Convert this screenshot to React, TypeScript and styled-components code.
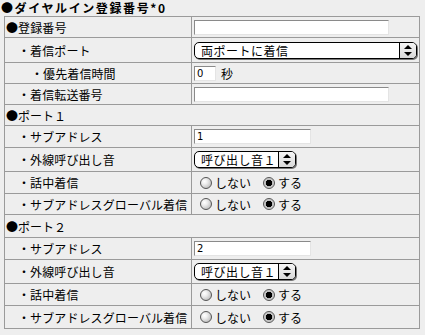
import React from 'react';
import styled, { createGlobalStyle } from 'styled-components';

const Global = createGlobalStyle`
  html, body { margin: 0; padding: 0; background: #eeeeee; }
  body {
    font-family: "Noto Sans CJK JP", "Noto Sans", sans-serif;
    font-size: 12px;
    color: #000;
  }
`;

const Page = styled.div`
  width: 425px;
  height: 335px;
  box-sizing: border-box;
  overflow: hidden;
`;

const Title = styled.div`
  height: 16px;
  line-height: 15px;
  padding-left: 1px;
  font-weight: bold;
  font-size: 12px;
  letter-spacing: 1.6px;
  white-space: nowrap;
`;

const Table = styled.div`
  margin-left: 4px;
  width: 416px;
  box-sizing: border-box;
  border: 1px solid #9a9a9a;
  border-top: none;
  display: flex;
  flex-direction: column;
`;

const Row = styled.div<{ $h: number }>`
  display: grid;
  grid-template-columns: 187px 1fr;
  height: ${p => p.$h}px;
  border-top: 1px solid #9a9a9a;
  box-sizing: border-box;
`;

const HeadRow = styled.div<{ $h: number }>`
  display: flex;
  align-items: center;
  height: ${p => p.$h}px;
  border-top: 1px solid #9a9a9a;
  box-sizing: border-box;
  padding-left: 1px;
  white-space: nowrap;
`;

const Label = styled.div<{ $indent: number }>`
  display: flex;
  align-items: center;
  padding-left: ${p => p.$indent}px;
  border-right: 1px solid #9a9a9a;
  white-space: nowrap;
  letter-spacing: 0.1px;
`;

const Value = styled.div`
  display: flex;
  align-items: center;
  padding-left: 2px;
  gap: 4px;
`;

const TextBox = styled.div<{ $w: number }>`
  width: ${p => p.$w}px;
  height: 15px;
  box-sizing: border-box;
  background: #fff;
  border-top: 1px solid #8a8a8a;
  border-left: 1px solid #8a8a8a;
  border-right: 1px solid #e4e4e4;
  border-bottom: 1px solid #e4e4e4;
  font-family: "DejaVu Sans", sans-serif;
  font-size: 10px;
  line-height: 13px;
  padding-left: 2px;
`;

const Unit = styled.span`
  margin-left: 1px;
`;

const Select = styled.div<{ $w: number }>`
  width: ${p => p.$w}px;
  height: 17px;
  box-sizing: border-box;
  border: 1px solid #000;
  border-radius: 5px;
  background: #fff;
  display: flex;
  align-items: stretch;
  box-shadow: 1px 1px 0 #777;
  overflow: hidden;
  white-space: nowrap;
`;

const SelectText = styled.div`
  flex: 1;
  display: flex;
  align-items: center;
  padding-left: 6px;
  line-height: 15px;
  letter-spacing: 0.5px;
`;

const SelectArrow = styled.div`
  width: 16px;
  border-left: 1px solid #000;
  background: linear-gradient(#f6f6f6, #d8d8d8);
  display: flex;
  align-items: center;
  justify-content: center;
`;

const RadioGroup = styled.div`
  display: flex;
  align-items: center;
  padding-left: 6px;
`;

const RadioItem = styled.label`
  display: flex;
  align-items: center;
  gap: 3px;
  margin-right: 12px;
  white-space: nowrap;
`;

const RadioDot = styled.span<{ $on: boolean }>`
  width: 12px;
  height: 12px;
  box-sizing: border-box;
  border-radius: 50%;
  border: 1px solid #555;
  background: ${p =>
    p.$on
      ? 'radial-gradient(circle at 50% 50%, #000 0 3px, #bbb 3.5px, #eee 100%)'
      : 'radial-gradient(circle at 35% 35%, #fff 0, #eee 30%, #aaa 100%)'};
`;

const Arrows = () => (
  <svg width="8" height="11" viewBox="0 0 8 11">
    <path d="M4 0 L8 4 L0 4 Z" fill="#000" />
    <path d="M0 7 L8 7 L4 11 Z" fill="#000" />
  </svg>
);

const Sel = ({ w, text }: { w: number; text: string }) => (
  <Select $w={w}>
    <SelectText>{text}</SelectText>
    <SelectArrow>
      <Arrows />
    </SelectArrow>
  </Select>
);

const Radios = ({ on }: { on: number }) => (
  <RadioGroup>
    <RadioItem>
      <RadioDot $on={on === 0} />
      しない
    </RadioItem>
    <RadioItem>
      <RadioDot $on={on === 1} />
      する
    </RadioItem>
  </RadioGroup>
);

const PortBlock = ({ n, sub, tops }: { n: string; sub: string; tops: number[] }) => (
  <>
    <HeadRow $h={tops[0]}>●ポート{n}</HeadRow>
    <Row $h={tops[1]}>
      <Label $indent={13}>・サブアドレス</Label>
      <Value>
        <TextBox $w={117}>{sub}</TextBox>
      </Value>
    </Row>
    <Row $h={tops[2]}>
      <Label $indent={13}>・外線呼び出し音</Label>
      <Value>
        <Sel w={102} text="呼び出し音１" />
      </Value>
    </Row>
    <Row $h={tops[3]}>
      <Label $indent={13}>・話中着信</Label>
      <Value>
        <Radios on={1} />
      </Value>
    </Row>
    <Row $h={tops[4]}>
      <Label $indent={13}>・サブアドレスグローバル着信</Label>
      <Value>
        <Radios on={1} />
      </Value>
    </Row>
  </>
);

export default function App() {
  return (
    <Page>
      <Global />
      <Title>●ダイヤルイン登録番号*0</Title>
      <Table>
        <Row $h={21}>
          <Label $indent={1}>●登録番号</Label>
          <Value>
            <TextBox $w={195} />
          </Value>
        </Row>
        <Row $h={25}>
          <Label $indent={13}>・着信ポート</Label>
          <Value>
            <Sel w={223} text="両ポートに着信" />
          </Value>
        </Row>
        <Row $h={21}>
          <Label $indent={26}>・優先着信時間</Label>
          <Value>
            <TextBox $w={22}>0</TextBox>
            <Unit>秒</Unit>
          </Value>
        </Row>
        <Row $h={21}>
          <Label $indent={13}>・着信転送番号</Label>
          <Value>
            <TextBox $w={195} />
          </Value>
        </Row>
        <PortBlock n="１" sub="1" tops={[21, 22, 24, 22, 21]} />
        <PortBlock n="２" sub="2" tops={[23, 22, 24, 22, 23]} />
      </Table>
    </Page>
  );
}
